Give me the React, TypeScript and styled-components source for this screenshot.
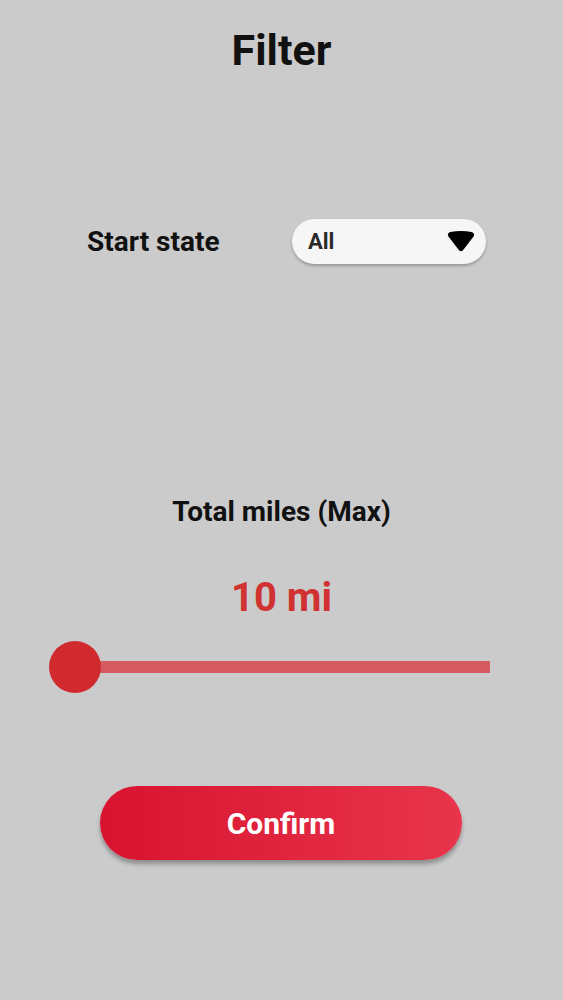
import styled, { createGlobalStyle } from 'styled-components';

const GlobalStyle = createGlobalStyle`
  html, body {
    margin: 0;
    padding: 0;
    background: #cccbcc;
  }
  body {
    font-family: Roboto, "Noto Sans", sans-serif;
    color: #111111;
  }
`;

const Page = styled.div`
  width: 563px;
  height: 1000px;
  display: flex;
  flex-direction: column;
  align-items: stretch;
`;

const Title = styled.h1`
  margin: 24px 0 0;
  font-size: 43px;
  line-height: 52px;
  font-weight: 700;
  text-align: center;
`;

const FilterRow = styled.div`
  margin-top: 143px;
  padding-left: 87px;
  display: flex;
  align-items: center;
`;

const Label = styled.span`
  width: 205px;
  font-size: 28px;
  font-weight: 700;
`;

const Select = styled.div`
  box-sizing: border-box;
  width: 194px;
  height: 45px;
  padding: 0 11px 0 16px;
  border-radius: 23px;
  background: #f7f6f7;
  box-shadow: 0 2px 3px rgba(0, 0, 0, 0.25);
  display: flex;
  align-items: center;
  justify-content: space-between;
  font-size: 22px;
  font-weight: 700;
  color: #2a2a2a;
`;

const Section = styled.div`
  margin-top: 231px;
  display: flex;
  flex-direction: column;
  align-items: center;
`;

const SectionTitle = styled.div`
  font-size: 28px;
  line-height: 34px;
  font-weight: 700;
`;

const Value = styled.div`
  margin-top: 45px;
  font-size: 40px;
  line-height: 48px;
  font-weight: 700;
  color: #d03232;
`;

const Slider = styled.div`
  margin: 19px 0 0 49px;
  width: 441px;
  height: 52px;
  display: flex;
  align-items: center;
  position: relative;
`;

const Track = styled.div`
  flex: 1;
  height: 12px;
  margin-left: 26px;
  background: #d55b60;
`;

const Thumb = styled.div`
  position: absolute;
  left: 0;
  top: 0;
  width: 52px;
  height: 52px;
  border-radius: 50%;
  background: #d02a2f;
`;

const Button = styled.button`
  margin: 93px 0 0 100px;
  width: 362px;
  height: 74px;
  border: none;
  border-radius: 37px;
  background: linear-gradient(90deg, #d8132f 0%, #e8354b 100%);
  box-shadow: 0 4px 4px rgba(0, 0, 0, 0.3);
  color: #ffffff;
  font-family: Roboto, "Noto Sans", sans-serif;
  font-size: 30px;
  font-weight: 700;
`;

export default function App() {
  return (
    <Page>
      <GlobalStyle />
      <Title>Filter</Title>

      <FilterRow>
        <Label>Start state</Label>
        <Select>
          All
          <svg width="28" height="21" viewBox="0 0 28 21">
            <path
              d="M4 4 Q14 2 24 4 L14 17 Z"
              fill="#000"
              stroke="#000"
              strokeWidth="6"
              strokeLinejoin="round"
            />
          </svg>
        </Select>
      </FilterRow>

      <Section>
        <SectionTitle>Total miles (Max)</SectionTitle>
        <Value>10 mi</Value>
      </Section>

      <Slider>
        <Track />
        <Thumb />
      </Slider>

      <Button>Confirm</Button>
    </Page>
  );
}
